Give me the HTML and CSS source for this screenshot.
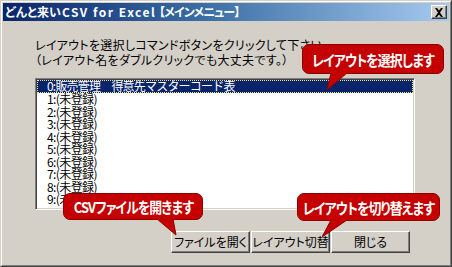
FILE: index.html
```html
<!DOCTYPE html>
<html lang="ja">
<head>
<meta charset="utf-8">
<link rel="stylesheet" href="styles.css">
</head>
<body>
<div class="window">
  <div class="frame">
    <div class="titlebar">
      <span class="title">どんと来い<span class="latin">CSV for Excel</span> <span class="bracket">【メインメニュー】</span></span>
      <span class="close"><svg width="10" height="9" viewBox="0 0 10 9"><path d="M1 0h2l2 2.5L7 0h2L6 4.5 9 9H7L5 6.5 3 9H1l3-4.5z" fill="#000"/></svg></span>
    </div>
    <div class="content">
      <p class="msg">レイアウトを選択しコマンドボタンをクリックして下さい。</p>
      <p class="msg">（レイアウト名をダブルクリックでも大丈夫です。）</p>
      <ul class="listbox">
        <li class="item selected">0:販売管理　得意先マスターコード表</li>
        <li class="item">1:(未登録)</li>
        <li class="item">2:(未登録)</li>
        <li class="item">3:(未登録)</li>
        <li class="item">4:(未登録)</li>
        <li class="item">5:(未登録)</li>
        <li class="item">6:(未登録)</li>
        <li class="item">7:(未登録)</li>
        <li class="item">8:(未登録)</li>
        <li class="item">9:(未登録)</li>
      </ul>
      <div class="buttons">
        <button class="btn">ファイルを開く</button>
        <button class="btn">レイアウト切替</button>
        <button class="btn">閉じる</button>
      </div>
    </div>
  </div>

  <div class="callout c1">
    <svg class="tail" width="24" height="18" viewBox="0 0 24 18"><polygon points="4,0 20,0 0,17" fill="#c40000"/><polyline points="20,0 0,17 4,0" fill="none" stroke="#8c0000" stroke-width="1"/></svg>
    <span class="ctext">レイアウトを選択します</span>
  </div>
  <div class="callout c2">
    <svg class="tail" width="24" height="18" viewBox="0 0 24 18"><polygon points="0,0 16,0 19,16" fill="#c40000"/><polyline points="0,0 19,16 16,0" fill="none" stroke="#8c0000" stroke-width="1"/></svg>
    <span class="ctext">CSVファイルを開きます</span>
  </div>
  <div class="callout c3">
    <svg class="tail" width="28" height="18" viewBox="0 0 28 18"><polygon points="9,0 25,0 0,17" fill="#c40000"/><polyline points="25,0 0,17 9,0" fill="none" stroke="#8c0000" stroke-width="1"/></svg>
    <span class="ctext">レイアウトを切り替えます</span>
  </div>
</div>
</body>
</html>
```
FILE: styles.css
```css
html, body {
  margin: 0;
  padding: 0;
  background: #d4d0c8;
}
body {
  font-family: "Noto Sans CJK JP", "Liberation Sans", sans-serif;
  font-size: 12px;
  color: #000;
}
.window {
  position: relative;
  width: 452px;
  height: 267px;
  box-sizing: border-box;
  border: 1px solid;
  border-color: #d4d0c8 #404040 #404040 #d4d0c8;
  background: #d4d0c8;
}
.frame {
  height: 100%;
  box-sizing: border-box;
  border: 1px solid;
  border-color: #ffffff #808080 #808080 #ffffff;
  padding: 1px;
  display: flex;
  flex-direction: column;
}
.titlebar {
  height: 18px;
  flex: none;
  display: flex;
  align-items: center;
  justify-content: space-between;
  padding: 0 2px 0 2px;
  background: linear-gradient(to right, #0a246a 0%, #3a6ea5 45%, #a6caf0 100%);
}
.title {
  color: #fff;
  font-weight: bold;
  font-size: 12px;
  font-feature-settings: "palt";
  white-space: nowrap;
  line-height: 18px;
}
.latin {
  letter-spacing: 1.5px;
  margin-left: 1px;
}
.bracket {
  letter-spacing: -0.9px;
}
.close {
  width: 16px;
  height: 14px;
  box-sizing: border-box;
  background: #d4d0c8;
  border: 1px solid;
  border-color: #ffffff #404040 #404040 #ffffff;
  box-shadow: inset -1px -1px 0 #808080;
  display: flex;
  align-items: center;
  justify-content: center;
}
.content {
  flex: 1;
  padding: 16px 0 0 32px;
  display: flex;
  flex-direction: column;
}
.msg {
  margin: 0;
  line-height: 15px;
  font-size: 12px;
  font-feature-settings: "palt";
  letter-spacing: 0.3px;
  white-space: nowrap;
}
.listbox {
  list-style: none;
  margin: 11px 0 0 0;
  padding: 0;
  width: 380px;
  height: 132px;
  box-sizing: border-box;
  background: #fff;
  border: 1px solid;
  border-color: #808080 #ffffff #ffffff #808080;
  box-shadow: inset 1px 1px 0 #404040, inset -1px -1px 0 #d4d0c8;
  padding: 1px;
  overflow: hidden;
}
.item {
  height: 12.5px;
  line-height: 12.5px;
  padding-left: 10px;
  font-size: 12px;
  letter-spacing: -0.6px;
  white-space: nowrap;
  box-sizing: border-box;
}
.selected {
  background: #0a246a;
  color: #fff;
  height: 13px;
  line-height: 12px;
  letter-spacing: -0.8px;
  outline: 1px dotted #f0e68c;
  outline-offset: -1px;
}
.buttons {
  display: flex;
  justify-content: flex-end;
  gap: 1px;
  margin: 21px 39px 0 0;
}
.btn {
  width: 79px;
  height: 22px;
  box-sizing: border-box;
  font-family: inherit;
  font-size: 12px;
  background: #d4d0c8;
  color: #000;
  border: 1px solid;
  border-color: #ffffff #404040 #404040 #ffffff;
  box-shadow: inset -1px -1px 0 #808080;
  padding: 0;
  line-height: 18px;
  font-feature-settings: "palt";
}
.callout {
  position: absolute;
  box-sizing: border-box;
  background: #c40000;
  border: 1px solid #8c0000;
  border-radius: 7px;
  color: #fff;
  font-weight: bold;
  font-size: 15px;
  font-feature-settings: "palt";
  letter-spacing: -1px;
  display: flex;
  align-items: center;
  justify-content: center;
  white-space: nowrap;
}
.ctext {
  position: relative;
  z-index: 1;
  display: inline-block;
  transform: scaleX(0.86);
}
.tail {
  position: absolute;
  display: block;
}
.c1 {
  left: 301px;
  top: 43px;
  width: 142px;
  height: 30px;
}
.c1 .tail {
  left: 24px;
  top: 28px;
}
.c2 {
  left: 62px;
  top: 192px;
  width: 140px;
  height: 27px;
}
.c2 .tail {
  left: 93px;
  top: 25px;
}
.c3 {
  left: 296px;
  top: 192px;
  width: 143px;
  height: 28px;
}
.c3 .tail {
  left: 24px;
  top: 26px;
}
```
